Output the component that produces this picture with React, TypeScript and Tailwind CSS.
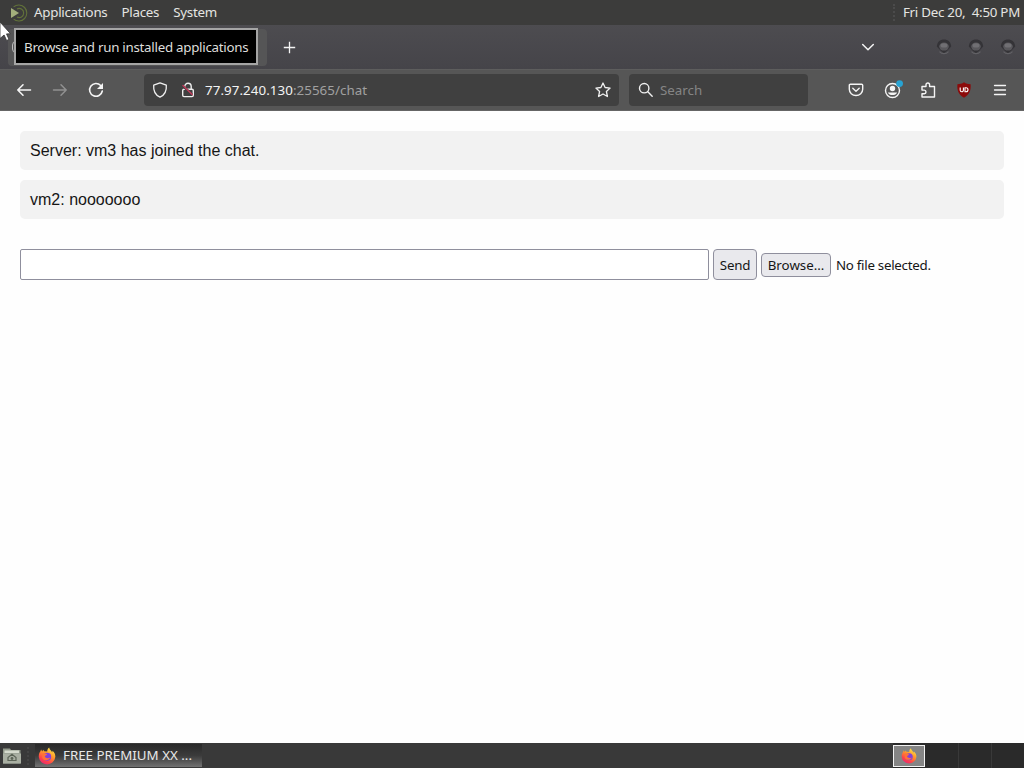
import { useState } from "react";

const messages = [
  { id: 1, author: "Server", text: "vm3 has joined the chat." },
  { id: 2, author: "vm2", text: "nooooooo" },
];

const windowButtons = ["minimize", "maximize", "close"];

function DistroIcon() {
  return (
    <svg width="20" height="20" viewBox="0 0 20 20" fill="none">
      <path d="M4.6 3.9A8 8 0 1 1 4.6 16.1" stroke="#62723a" strokeWidth="1.1" />
      <path d="M8 5.9A4.6 4.6 0 1 1 8 14.1" stroke="#62723a" strokeWidth="1.1" />
      <path d="M2 5L10 10L2 15Z" fill="#a3af7c" />
    </svg>
  );
}

function FirefoxIcon({ size }: { size: number }) {
  return (
    <svg width={size} height={size} viewBox="0 0 18 18">
      <defs>
        <linearGradient id="flame" x1="0.8" y1="0" x2="0.25" y2="1">
          <stop offset="0" stopColor="#fff04a" />
          <stop offset="0.4" stopColor="#ff9a2b" />
          <stop offset="0.75" stopColor="#ff4548" />
          <stop offset="1" stopColor="#e52576" />
        </linearGradient>
      </defs>
      <path
        d="M2.4 4.2L3.1 2.6L4.2 4.4L5.2 2.8L6.2 4.3L9.2 4.6C9.2 2.8 9.9 1.3 11.2.4C11.4 2.7 13.2 3.2 14.2 5.4L14.5 3.8C16.5 5.6 17.5 7.6 17.3 10A8.3 8.3 0 0 1 .8 10C.6 7.8 1.2 5.8 2.4 4.2Z"
        fill="url(#flame)"
      />
      <circle cx="9.2" cy="9.8" r="4" fill="#8241d9" />
      <path d="M4.3 6.6C6.2 5.9 7.6 6.7 9.1 7.3C8.7 8.5 7.3 8.4 6.8 9.3C7.2 11.4 10 11.7 12.2 10.6C10.9 14 5.8 14.4 4.3 10.9Z" fill="#ff7139" />
    </svg>
  );
}

function WindowButton() {
  return (
    <svg width="16" height="16" viewBox="0 0 16 16">
      <path d="M.8 7.6C1.2 3 4 .6 8 .6S14.8 3 15.2 7.6L11.5 11.5L8 14.3L4.5 11.5Z" fill="#343337" />
      <path d="M3.5 12.6C6 15.4 10 15.4 12.5 12.6" fill="none" stroke="#626165" strokeWidth="1.2" />
      <ellipse cx="8" cy="7.6" rx="4.8" ry="4" fill="#59585c" />
      <ellipse cx="8" cy="6.4" rx="3.4" ry="2.2" fill="#706f73" />
    </svg>
  );
}

function BackIcon() {
  return (
    <svg width="16" height="16" viewBox="0 0 16 16" fill="none" stroke="currentColor" strokeWidth="1.6" strokeLinecap="round" strokeLinejoin="round">
      <path d="M14.5 8H1.8M7 2.8L1.8 8L7 13.2" />
    </svg>
  );
}

function ForwardIcon() {
  return (
    <svg width="16" height="16" viewBox="0 0 16 16" fill="none" stroke="currentColor" strokeWidth="1.5" strokeLinecap="round" strokeLinejoin="round">
      <path d="M1.5 8H14.2M9 2.8L14.2 8L9 13.2" />
    </svg>
  );
}

function ReloadIcon() {
  return (
    <svg width="16" height="16" viewBox="0 0 16 16" fill="none">
      <path d="M12.7 3.5A6.4 6.4 0 1 0 14.3 9" stroke="currentColor" strokeWidth="1.6" strokeLinecap="round" />
      <path d="M15 1V7H9Z" fill="currentColor" />
    </svg>
  );
}

function ShieldIcon() {
  return (
    <svg width="16" height="16" viewBox="0 0 16 16" fill="none" stroke="#f0f0f0" strokeWidth="1.3" strokeLinejoin="round">
      <path d="M8 .9L14.3 3.2C14.8 8.8 12.5 13 8 15.2C3.5 13 1.2 8.8 1.7 3.2Z" />
    </svg>
  );
}

function InsecureLockIcon() {
  return (
    <svg width="16" height="16" viewBox="0 0 16 16" fill="none">
      <path d="M4.8 7V4.4A3.2 3.2 0 0 1 11.2 4.4V7" stroke="#eeeeee" strokeWidth="1.4" />
      <rect x="2.7" y="7.2" width="10.6" height="7.4" rx="1.3" stroke="#eeeeee" strokeWidth="1.4" />
      <path d="M3.6 4.6L11.8 12.4" stroke="#404040" strokeWidth="2.6" />
      <path d="M3 3.6L12.2 12.6" stroke="#c43a5c" strokeWidth="1.4" strokeLinecap="round" />
    </svg>
  );
}

function StarIcon() {
  return (
    <svg width="16" height="16" viewBox="0 0 16 16" fill="none" stroke="#f0f0f0" strokeWidth="1.3" strokeLinejoin="round">
      <path d="M8 1L10.1 5.5L15.1 6.1L11.4 9.5L12.4 14.5L8 12L3.6 14.5L4.6 9.5L.9 6.1L5.9 5.5Z" />
    </svg>
  );
}

function SearchIcon() {
  return (
    <svg width="16" height="16" viewBox="0 0 16 16" fill="none" stroke="#f0f0f0" strokeWidth="1.4" strokeLinecap="round">
      <circle cx="6.2" cy="6.2" r="4.7" />
      <path d="M9.8 9.8L14.2 14.2" />
    </svg>
  );
}

function PocketIcon() {
  return (
    <svg width="16" height="16" viewBox="0 0 16 16" fill="none" stroke="currentColor" strokeWidth="1.4" strokeLinecap="round" strokeLinejoin="round">
      <path d="M2.4 2.2H13.6Q14.7 2.2 14.7 3.3V7.3A6.7 6.2 0 0 1 1.3 7.3V3.3Q1.3 2.2 2.4 2.2Z" />
      <path d="M4.8 6.3L8 9.3L11.2 6.3" />
    </svg>
  );
}

function AccountIcon() {
  return (
    <svg width="20" height="20" viewBox="0 0 20 20" fill="none">
      <circle cx="9.5" cy="10.5" r="7" stroke="#f4f4f4" strokeWidth="1.4" />
      <circle cx="9.5" cy="8.5" r="2.7" fill="#f4f4f4" />
      <path d="M4.9 12.5H14.1C13.2 15.9 5.8 15.9 4.9 12.5Z" fill="#f4f4f4" />
      <circle cx="16.6" cy="3.6" r="3.4" fill="#27a3d3" />
    </svg>
  );
}

function ExtensionsIcon() {
  return (
    <svg width="16" height="16" viewBox="0 0 16 16" fill="none" stroke="currentColor" strokeWidth="1.4" strokeLinejoin="round">
      <path d="M2 4.5H6V2.8A1.8 1.8 0 0 1 9.6 2.8V4.5H14.5V15H2V11.7H4.2A1.8 1.8 0 0 0 4.2 8.1H2Z" />
    </svg>
  );
}

function UblockIcon() {
  return (
    <svg width="16" height="16" viewBox="0 0 16 16">
      <path d="M8 .3C10 1.7 12.2 2.2 14.6 2.3C15.1 8.8 13.3 12.8 8 15.7C2.7 12.8.9 8.8 1.4 2.3C3.8 2.2 6 1.7 8 .3Z" fill="#8c0a0a" />
      <path d="M4.2 5.5V8.2A1.6 1.6 0 0 0 7.4 8.2V5.5" fill="none" stroke="#fff" strokeWidth="1.1" />
      <path d="M9 5.7H10A2 2 0 0 1 10 9.7H9Z" fill="none" stroke="#fff" strokeWidth="1.1" />
    </svg>
  );
}

function MenuIcon() {
  return (
    <svg width="16" height="16" viewBox="0 0 16 16" stroke="currentColor" strokeWidth="1.3" strokeLinecap="round">
      <path d="M2.5 3.5H13.5M2.5 8H13.5M2.5 12.5H13.5" />
    </svg>
  );
}

function FolderIcon() {
  return (
    <svg width="20" height="18" viewBox="0 0 20 18">
      <path d="M1 1.5H8L9 3H18.5V16.5H1Z" fill="#92998b" />
      <path d="M2.5 3.5H17V6H2.5Z" fill="#d5dacd" />
      <path d="M1 6.5H19V16.5H1Z" fill="#a9afa2" />
      <path d="M6 13.5V10.5L10 7.3L14 10.5V13.5Z" fill="none" stroke="#5c6457" strokeWidth="1.2" />
      <circle cx="10" cy="11.5" r="1.4" fill="#5c6457" />
    </svg>
  );
}

function CursorIcon() {
  return (
    <svg width="12" height="20" viewBox="0 0 12 20">
      <path d="M0 0L10.5 11.7L6.5 11.9L9 17.4L6.6 18.5L4.1 13L0 16.5Z" fill="#fff" stroke="#333" strokeWidth="0.8" />
    </svg>
  );
}

function TopPanel() {
  return (
    <div className="flex h-[25px] items-center bg-[#3c3c3b] pl-[9px] pr-[4px] text-[13.33px] leading-none tracking-[-0.26px] text-[#e5e5e2]">
      <DistroIcon />
      <span className="ml-[5px]">Applications</span>
      <span className="ml-[14px]">Places</span>
      <span className="ml-[14px]">System</span>
      <div className="ml-auto mr-[8px] h-[17px] border-l-2 border-dotted border-[#4b4b4b]" />
      <span className="whitespace-pre">Fri Dec 20,  4:50 PM</span>
    </div>
  );
}

function TabStrip() {
  return (
    <div className="flex h-[44px] items-center bg-gradient-to-b from-[#4d4c50] to-[#454449]">
      <div className="ml-[8px] flex h-[37px] w-[259px] items-center rounded bg-[#555556] pl-[4px]">
        <div className="h-[12px] w-[12px] rounded-sm border border-[#bbb]" />
      </div>
      <svg className="ml-[16px]" width="13" height="13" viewBox="0 0 13 13" stroke="#f4f4f4" strokeWidth="1.3">
        <path d="M6.5 .8V12.2M.8 6.5H12.2" />
      </svg>
      <svg className="ml-auto" width="14" height="9" viewBox="0 0 14 9" fill="none" stroke="#f4f4f4" strokeWidth="1.5" strokeLinecap="round" strokeLinejoin="round">
        <path d="M1.7 1.5L7 6.8L12.3 1.5" />
      </svg>
      <div className="ml-[61px] mr-[8px] flex gap-[16px] pb-[1px]">
        {windowButtons.map((name) => (
          <WindowButton key={name} />
        ))}
      </div>
    </div>
  );
}

function Toolbar() {
  return (
    <div className="flex h-[42px] items-center border-b border-t border-b-[#656565] border-t-[#5d5d5d] bg-[#565656] px-[16px] text-[#f5f5f5]">
      <BackIcon />
      <div className="ml-[20px] text-[#919191]">
        <ForwardIcon />
      </div>
      <div className="ml-[20px]">
        <ReloadIcon />
      </div>
      <div className="ml-[40px] flex h-[32px] w-[475px] items-center rounded bg-[#404040] pl-[8px] pr-[8px]">
        <ShieldIcon />
        <div className="ml-[12px]">
          <InsecureLockIcon />
        </div>
        <div className="ml-[9px] pt-[2px] text-[13.33px] leading-none tracking-[0.07px] text-[#a0a0a0]">
          <span className="text-[#f3f3f3]">77.97.240.130</span>:25565/chat
        </div>
        <div className="ml-auto">
          <StarIcon />
        </div>
      </div>
      <div className="ml-[10px] flex h-[32px] w-[179px] items-center rounded bg-[#404040] pl-[9px] text-[13.33px] leading-none text-[#858585]">
        <SearchIcon />
        <span className="ml-[6px] pt-[2px]">Search</span>
      </div>
      <div className="ml-auto flex items-center">
        <PocketIcon />
        <div className="ml-[19px] mb-[1px]">
          <AccountIcon />
        </div>
        <div className="ml-[17px]">
          <ExtensionsIcon />
        </div>
        <div className="ml-[20px]">
          <UblockIcon />
        </div>
        <div className="ml-[20px]">
          <MenuIcon />
        </div>
      </div>
    </div>
  );
}

function ChatPage() {
  const [draft, setDraft] = useState("");

  return (
    <main className="flex-1 bg-[#fefefe] px-[20px] pt-[20px] text-[#161616]">
      <ul className="space-y-[10px] font-['Liberation_Sans',Arial,sans-serif] text-[16px] leading-[19px]">
        {messages.map((m) => (
          <li key={m.id} className="rounded-[5px] bg-[#f2f2f2] p-[10px]">
            {m.author}: {m.text}
          </li>
        ))}
      </ul>
      <form className="mt-[30px] flex items-center text-[13.33px]" onSubmit={(e) => e.preventDefault()}>
        <input
          value={draft}
          onChange={(e) => setDraft(e.target.value)}
          className="h-[31px] w-[689px] rounded-[2px] border border-[#8f8f9d] bg-white px-[5px]"
        />
        <button className="ml-[4px] h-[31px] w-[44px] rounded border border-[#8f8f9d] bg-[#e9e9ed] pt-[2px] tracking-[-0.2px]">Send</button>
        <button type="button" className="ml-[4px] h-[24px] w-[70px] rounded border border-[#8f8f9d] bg-[#e9e9ed] pt-[2px] leading-none">
          Browse…
        </button>
        <span className="ml-[5px] pt-[2px] tracking-[-0.28px]">No file selected.</span>
      </form>
    </main>
  );
}

function Taskbar() {
  return (
    <div className="flex h-[25px] items-center bg-[#393939] pl-[2px] text-[13.33px] leading-none text-[#e8e8e8]">
      <FolderIcon />
      <div className="ml-[5px] h-[18px] border-l-2 border-dotted border-[#444444]" />
      <div className="ml-[6px] flex h-[23px] w-[167px] items-center bg-gradient-to-b from-[#292929] via-[#3b3b3b] to-[#737373] pl-[3px]">
        <FirefoxIcon size={18} />
        <span className="ml-[7px] whitespace-nowrap pt-[1px]">FREE PREMIUM XX ...</span>
      </div>
      <div className="ml-auto flex h-full w-[131px] bg-[#2a2a2a]">
        <div className="mt-[2px] flex h-[22px] w-[32px] items-center justify-center border border-[#f2f2f2] bg-[#858585]">
          <FirefoxIcon size={16} />
        </div>
        <div className="w-[34px] border-r border-[#393939]" />
        <div className="w-[33px] border-r border-[#393939]" />
      </div>
    </div>
  );
}

export default function App() {
  return (
    <div className="relative flex h-[768px] w-[1024px] flex-col overflow-hidden font-['Noto_Sans',sans-serif]">
      <TopPanel />
      <TabStrip />
      <Toolbar />
      <ChatPage />
      <Taskbar />

      {/* panel menu tooltip */}
      <div className="absolute left-[14px] top-[28px] flex h-[37px] w-[244px] items-center whitespace-nowrap border-2 border-[#a5a5a5] bg-black pl-[8px] pt-[2px] text-[13.33px] leading-none tracking-[-0.27px] text-[#dededb]">
        Browse and run installed applications
      </div>
      <div className="absolute left-0 top-[22px]">
        <CursorIcon />
      </div>
    </div>
  );
}
